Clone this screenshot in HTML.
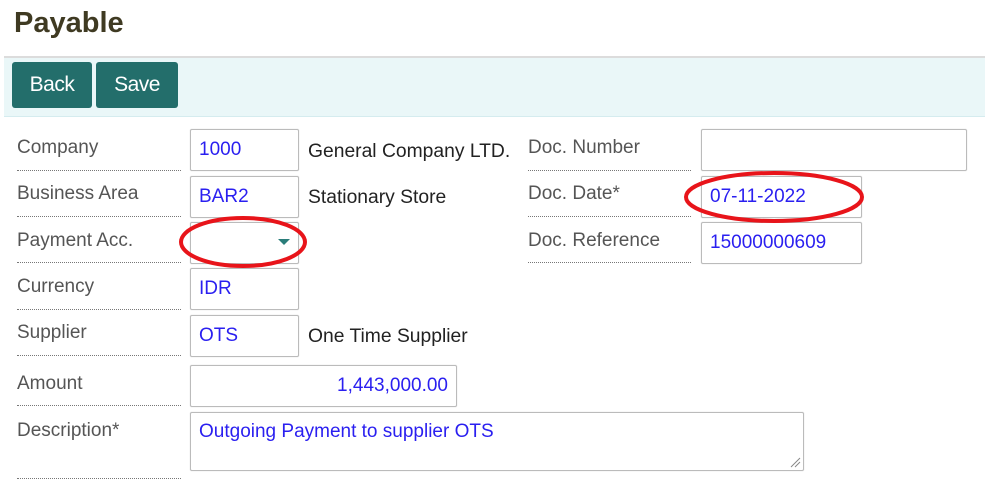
<!DOCTYPE html>
<html><head><meta charset="utf-8"><style>
*{margin:0;padding:0;box-sizing:border-box}
body{width:985px;height:482px;background:#fff;position:relative;overflow:hidden;font-family:"Liberation Sans",Arial,sans-serif}
.a{position:absolute}
h1{position:absolute;left:14px;top:7px;font-size:29px;font-weight:bold;color:#3f3a22}
.bar{left:4px;top:56px;width:981px;height:61px;background:#eaf7f8;border-top:2px solid #dcdcdc;border-bottom:1px solid #d5ecef}
.btn{top:62px;height:46px;background:#236e6b;color:#fff;font-size:21px;border-radius:3px;text-align:center;line-height:46px;letter-spacing:-0.5px}
.lbl{font-size:19px;color:#555;}
.dot{height:0;border-top:1px dotted #777;}
.in{border:1px solid #bbb;border-radius:2px;background:#fff;font-size:19px;color:#2a1ff0;padding-left:8px;line-height:40px;box-shadow:0 0 1px #ccc}
.t{font-size:19.3px;color:#222}
</style></head><body>
<h1>Payable</h1>
<div class="a bar"></div>
<div class="a btn" style="left:12px;width:80px">Back</div>
<div class="a btn" style="left:96px;width:82px">Save</div>

<div class="a lbl" style="left:17px;top:137px">Company</div>
<div class="a dot" style="left:17px;top:170px;width:164px"></div>
<div class="a in" style="left:190px;top:129px;width:109px;height:42px">1000</div>
<div class="a t" style="left:308px;top:141px">General Company LTD.</div>

<div class="a lbl" style="left:17px;top:183px">Business Area</div>
<div class="a dot" style="left:17px;top:216px;width:164px"></div>
<div class="a in" style="left:190px;top:176px;width:109px;height:42px">BAR2</div>
<div class="a t" style="left:308px;top:187px">Stationary Store</div>

<div class="a lbl" style="left:17px;top:230px">Payment Acc.</div>
<div class="a dot" style="left:17px;top:262px;width:164px"></div>
<div class="a in" style="left:190px;top:222px;width:109px;height:42px"></div>
<div class="a" style="left:278px;top:239px;width:0;height:0;border-left:6px solid transparent;border-right:6px solid transparent;border-top:6px solid #2a7d7a"></div>

<div class="a lbl" style="left:17px;top:276px">Currency</div>
<div class="a dot" style="left:17px;top:309px;width:164px"></div>
<div class="a in" style="left:190px;top:268px;width:109px;height:42px">IDR</div>

<div class="a lbl" style="left:17px;top:322px">Supplier</div>
<div class="a dot" style="left:17px;top:355px;width:164px"></div>
<div class="a in" style="left:190px;top:315px;width:109px;height:42px">OTS</div>
<div class="a t" style="left:308px;top:326px">One Time Supplier</div>

<div class="a lbl" style="left:17px;top:373px">Amount</div>
<div class="a dot" style="left:17px;top:405px;width:164px"></div>
<div class="a in" style="left:190px;top:365px;width:267px;height:42px;text-align:right;padding-right:8px">1,443,000.00</div>

<div class="a lbl" style="left:17px;top:420px">Description*</div>
<div class="a dot" style="left:17px;top:478px;width:164px"></div>
<div class="a in" style="left:190px;top:412px;width:614px;height:59px;line-height:22px;padding-top:8px">Outgoing Payment to supplier OTS</div>
<svg class="a" style="left:789px;top:456px" width="12" height="12"><path d="M2 11L11 2M6 11L11 6" stroke="#888" stroke-width="1"/></svg>

<div class="a lbl" style="left:528px;top:137px">Doc. Number</div>
<div class="a dot" style="left:528px;top:170px;width:163px"></div>
<div class="a in" style="left:701px;top:129px;width:266px;height:42px"></div>

<div class="a lbl" style="left:528px;top:183px">Doc. Date*</div>
<div class="a dot" style="left:528px;top:216px;width:163px"></div>
<div class="a in" style="left:701px;top:176px;width:161px;height:42px">07-11-2022</div>

<div class="a lbl" style="left:528px;top:230px">Doc. Reference</div>
<div class="a dot" style="left:528px;top:262px;width:163px"></div>
<div class="a in" style="left:701px;top:222px;width:161px;height:42px">15000000609</div>

<svg class="a" style="left:0;top:0" width="985" height="482">
<ellipse cx="774" cy="197" rx="88" ry="24" fill="none" stroke="#e8141a" stroke-width="4"/>
<ellipse cx="243" cy="242" rx="62" ry="24" fill="none" stroke="#e8141a" stroke-width="4"/>
</svg>
</body></html>
